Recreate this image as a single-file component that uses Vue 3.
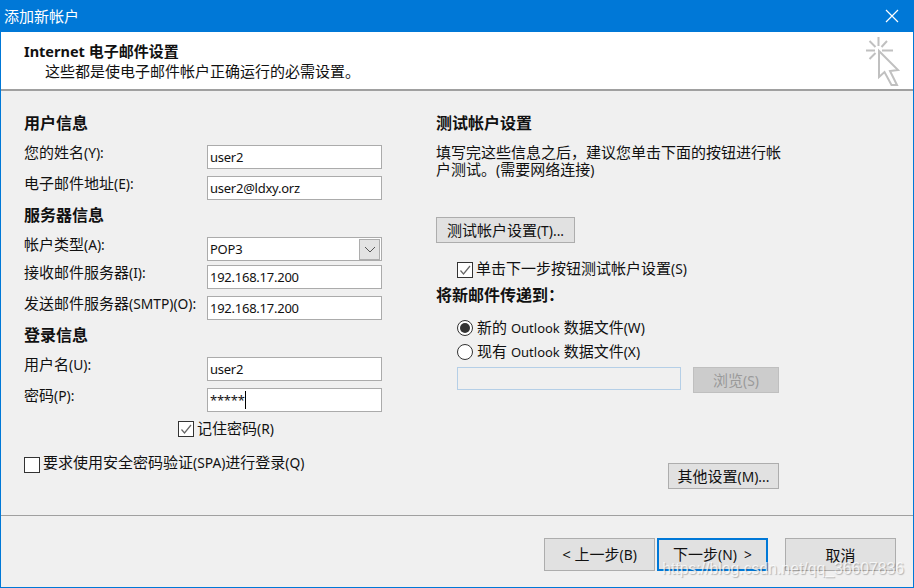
<script setup>
const sections = [
  { title: '用户信息', rows: [
    { cjk: '您的姓名', latin: '(Y):', value: 'user2', gap: 'g12' },
    { cjk: '电子邮件地址', latin: '(E):', value: 'user2@ldxy.orz', gap: 'g7' },
  ]},
  { title: '服务器信息', rows: [
    { cjk: '帐户类型', latin: '(A):', value: 'POP3', gap: 'g12', combo: true },
    { cjk: '接收邮件服务器', latin: '(I):', value: '192.168.17.200', gap: 'g4' },
    { cjk: '发送邮件服务器', latin: '(SMTP)(O):', value: '192.168.17.200', gap: 'g7' },
  ]},
  { title: '登录信息', rows: [
    { cjk: '用户名', latin: '(U):', value: 'user2', gap: 'g12' },
    { cjk: '密码', latin: '(P):', value: '*****', gap: 'g7', caret: true },
  ]},
]
</script>

<template>
  <div class="window">
    <div class="titlebar">
      <span class="title">添加新帐户</span>
      <svg class="close" width="14" height="14" viewBox="0 0 14 14">
        <path d="M1 1 L13 13 M13 1 L1 13" stroke="#fff" stroke-width="1.2" fill="none" />
      </svg>
    </div>

    <div class="header">
      <div class="h-title"><span class="h-latin">Internet</span> 电子邮件设置</div>
      <div class="h-sub">这些都是使电子邮件帐户正确运行的必需设置。</div>
      <svg class="wizard" width="36" height="52" viewBox="0 0 36 52">
        <g stroke="#c0c0c0" stroke-width="2" fill="none">
          <path d="M12.5 0 V9 M0 13.5 H9 M16 13.5 H27 M3.5 4 L9.5 10 M21 4 L15.5 10 M3.5 22 L9.5 16" />
          <path d="M13 14 L32 33 L24 34 L31 48 L25.500 48 L18.500 35 L13 40 Z" fill="#fff" />
        </g>
      </svg>
    </div>

    <div class="body">
      <div class="left">
        <template v-for="sec in sections" :key="sec.title">
          <div class="heading">{{ sec.title }}</div>
          <div v-for="row in sec.rows" :key="row.cjk" class="row" :class="row.gap">
            <span class="label">{{ row.cjk }}<span class="l">{{ row.latin }}</span></span>
            <div class="field">
              <span class="val">{{ row.value }}</span>
              <span v-if="row.caret" class="caret"></span>
              <span v-if="row.combo" class="drop">
                <svg width="12" height="7" viewBox="0 0 12 7"><path d="M1 1 L6 6 L11 1" stroke="#555" fill="none" /></svg>
              </span>
            </div>
          </div>
        </template>
        <label class="check remember">
          <span class="box"><svg width="14" height="14" viewBox="0 0 14 14"><path d="M2.500 7.500 L5.500 11 L12 3" stroke="#666" stroke-width="1.200" fill="none" /></svg></span>
          <span>记住密码<span class="l">(R)</span></span>
        </label>
        <label class="check spa">
          <span class="box"></span>
          <span class="spa-text">要求使用安全密码验证<span class="l">(SPA)</span>进行登录<span class="l">(Q)</span></span>
        </label>
      </div>

      <div class="right">
        <div class="heading">测试帐户设置</div>
        <p class="desc">填写完这些信息之后，建议您单击下面的按钮进行帐户测试。<span class="l">(</span>需要网络连接<span class="l">)</span></p>
        <button class="btn test">测试帐户设置<span class="l">(T)...</span></button>
        <label class="check test-check">
          <span class="box"><svg width="14" height="14" viewBox="0 0 14 14"><path d="M2.500 7.500 L5.500 11 L12 3" stroke="#666" stroke-width="1.200" fill="none" /></svg></span>
          <span>单击下一步按钮测试帐户设置<span class="l">(S)</span></span>
        </label>
        <div class="heading deliver">将新邮件传递到：</div>
        <label class="radio r1">
          <span class="dot on"></span>
          <span>新的 <span class="o">Outlook</span> 数据文件<span class="l">(W)</span></span>
        </label>
        <label class="radio r2">
          <span class="dot"></span>
          <span>现有 <span class="o">Outlook</span> 数据文件<span class="l">(X)</span></span>
        </label>
        <div class="browse-row">
          <div class="path"></div>
          <button class="btn browse">浏览<span class="l">(S)</span></button>
        </div>
        <button class="btn more">其他设置<span class="l">(M)...</span></button>
      </div>
    </div>

    <div class="footer">
      <button class="btn nav">&lt; 上一步<span class="l">(B)</span></button>
      <button class="btn nav primary">下一步<span class="l">(N)&nbsp;&nbsp;&gt;</span></button>
      <button class="btn nav cancel">取消</button>
    </div>

    <div class="watermark">https://blog.csdn.net/qq_36607836</div>
  </div>
</template>

<style>
html, body { margin: 0; padding: 0; }
</style>

<style scoped>
.window {
  position: relative;
  box-sizing: border-box;
  width: 914px;
  height: 588px;
  overflow: hidden;
  display: flex;
  flex-direction: column;
  background: #f0f0f0;
  border: 1px solid #0078d7;
  border-top: 0;
  font-family: "Noto Sans", "Noto Sans CJK SC", sans-serif;
  font-size: 15px;
  line-height: 18px;
  color: #111;
}
.l { font-size: 13.8px; }
.o { font-size: 13px; }
.titlebar {
  height: 32px;
  margin: 0 -1px;
  flex: none;
  display: flex;
  align-items: center;
  justify-content: space-between;
  padding: 0 15px 0 4px;
  background: #0078d7;
  color: #fff;
}
.close { display: block; }
.header {
  position: relative;
  flex: none;
  height: 59px;
  box-sizing: border-box;
  padding: 10px 0 0 23px;
  background: #fff;
  border-bottom: 2px solid #a0a0a0;
}
.h-title { font-weight: 700; height: 20px; line-height: 18px; }
.h-latin { font-size: 14.500px; }
.h-sub { padding-left: 21px; }
.wizard { position: absolute; right: 11px; top: 5px; }
.body {
  flex: 1;
  display: flex;
  padding: 22px 0 0 23px;
}
.left { width: 412px; flex: none; display: flex; flex-direction: column; }
.right { width: 343px; flex: none; display: flex; flex-direction: column; }
.heading { font-size: 16px; font-weight: 700; height: 20px; line-height: 20px; }
.left .heading + .row { margin-top: 12px; }
.left .row + .heading { margin-top: 5px; }
.row { display: flex; width: 358px; height: 24px; }
.g12 { margin-top: 12px; }
.g7 { margin-top: 7px; }
.g4 { margin-top: 4px; }
.label { width: 183px; flex: none; line-height: 18px; margin-top: -2px; }
.field {
  position: relative;
  flex: 1;
  box-sizing: border-box;
  display: flex;
  align-items: center;
  padding-left: 2px;
  background: #fff;
  border: 1px solid #ababab;
  font-size: 13px;
  letter-spacing: -0.25px;
}
.val { margin-top: -1px; }
.caret { width: 1px; height: 18px; background: #000; }
.drop {
  position: absolute;
  top: 1px;
  right: 1px;
  width: 19px;
  height: 19px;
  display: flex;
  align-items: center;
  justify-content: center;
  background: #e3e3e3;
  border: 1px solid #adadad;
}
.check, .radio { display: flex; align-items: flex-start; }
.box {
  box-sizing: border-box;
  width: 16px;
  height: 16px;
  flex: none;
  display: flex;
  align-items: center;
  justify-content: center;
  background: #fff;
  border: 1px solid #333;
}
.check > span:last-child { margin-left: 3px; margin-top: -2px; }
.radio > span:last-child { margin-left: 4px; margin-top: -2px; }
.remember { margin: 9px 0 0 154px; }
.spa { margin-top: 19px; }
.check.spa > .spa-text { margin-top: -4px; }
.desc { margin: 11px 0 0; line-height: 17px; width: 345px; }
.desc .l { line-height: 1; }
.btn {
  box-sizing: border-box;
  padding: 0;
  font: inherit;
  color: #111;
  background: #e1e1e1;
  border: 1px solid #adadad;
}
.test { width: 139px; height: 26px; margin-top: 39px; }
.test-check { margin: 19px 0 0 21px; }
.check.test-check > span:last-child { margin-top: -3px; }
.deliver { margin-top: 7px; }
.radio { height: 18px; margin-left: 21px; }
.r1 { margin-top: 15px; }
.r2 { margin-top: 6px; }
.dot {
  box-sizing: border-box;
  width: 16px;
  height: 16px;
  flex: none;
  display: flex;
  align-items: center;
  justify-content: center;
  background: #fff;
  border: 1px solid #333;
  border-radius: 50%;
}
.dot.on::after {
  content: "";
  width: 10px;
  height: 10px;
  border-radius: 50%;
  background: #333;
}
.browse-row { display: flex; align-items: flex-start; gap: 12px; margin: 5px 0 0 21px; }
.path {
  box-sizing: border-box;
  width: 224px;
  height: 23px;
  background: #f0f0f0;
  border: 1px solid #b5cfe7;
}
.browse {
  width: 86px;
  height: 26px;
  background: #ccc;
  border-color: #bfbfbf;
  color: #9a9a9a;
}
.more { align-self: flex-start; width: 111px; height: 26px; margin: 70px 0 0 232px; }
.footer {
  flex: none;
  height: 72px;
  box-sizing: border-box;
  display: flex;
  padding: 22px 0 0 543px;
  border-top: 1px solid #a0a0a0;
}
.nav { width: 111px; height: 33px; }
.primary { margin-left: 2px; border: 2px solid #0078d7; }
.cancel { margin-left: 17px; }
.watermark {
  position: absolute;
  right: 9px;
  bottom: 9px;
  font-family: "Liberation Sans", sans-serif;
  font-size: 15.750px;
  line-height: 18px;
  color: rgba(255, 255, 255, 0.75);
  text-shadow: 1px 1px 1px rgba(0, 0, 0, 0.25);
}
</style>
